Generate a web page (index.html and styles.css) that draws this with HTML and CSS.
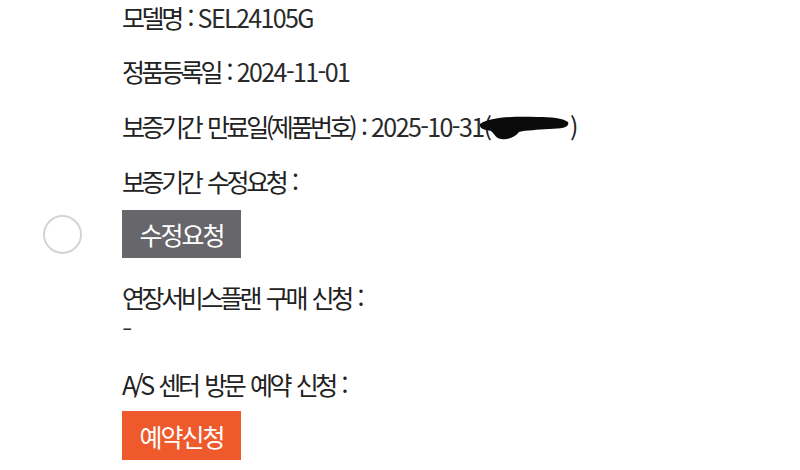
FILE: index.html
```html
<!DOCTYPE html>
<html lang="ko">
<head>
<meta charset="utf-8">
<link rel="stylesheet" href="styles.css">
</head>
<body>
<div class="sheet">
  <div class="gutter"></div>
  <div class="line l1">모델명 : <span class="val">SEL24105G</span></div>
  <div class="gutter"></div>
  <div class="line l2">정품등록일 : <span class="val">2024-11-01</span></div>
  <div class="gutter"></div>
  <div class="line l3">보증기간 만료일(제품번호) : <span class="val">2025-10-31</span><span class="redact">(<span class="hidden-num"></span><svg class="blot" width="92" height="28" viewBox="0 0 92 28"><path d="M1 10 C10 3 36 2 58 3 C72 3 84 4 89 8 C91 13 84 15 70 15 C58 16 48 16 40 18 C36 23 30 26 22 25 C16 24 16 20 12 17 C6 16 0 15 1 10 Z" fill="#0b0b0b"/></svg>)</span></div>
  <div class="gutter"></div>
  <div class="line l4">보증기간 수정요청 :</div>
  <div class="gutter radio-cell"><span class="radio"></span></div>
  <div class="btn-cell b1"><span class="btn gray">수정요청</span></div>
  <div class="gutter"></div>
  <div class="line l5">연장서비스플랜 구매 신청 :</div>
  <div class="gutter"></div>
  <div class="line dash"><span class="dash-glyph">-</span></div>
  <div class="gutter"></div>
  <div class="line l6">A/S 센터 방문 예약 신청 :</div>
  <div class="gutter"></div>
  <div class="btn-cell b2"><span class="btn orange">예약신청</span></div>
</div>
</body>
</html>
```

FILE: styles.css
```css
html, body {
  margin: 0;
  padding: 0;
  background: #ffffff;
}
body {
  width: 800px;
  height: 470px;
  overflow: hidden;
  font-family: "Noto Sans CJK KR", "Noto Sans", sans-serif;
  color: #222222;
}
.sheet {
  display: grid;
  grid-template-columns: 122px 1fr;
  align-items: center;
}
.line {
  font-size: 25px;
  line-height: 30px;
  height: 30px;
  letter-spacing: -3.4px;
  word-spacing: 3px;
  white-space: nowrap;
}
.val {
  letter-spacing: -1.6px;
  color: #2a2a2a;
}
.l1 { margin-top: 2px; }
.l2 { margin-top: 24px; }
.l3 { margin-top: 25px; }
.l4 { margin-top: 25px; }
.b1 { margin-top: 14px; }
.l5 { margin-top: 24px; }
.dash {
  margin-top: 1px;
  font-size: 18px;
  letter-spacing: 0;
  color: #2a2a2a;
}
.dash-glyph {
  display: inline-block;
  font-weight: 500;
  transform: scaleX(1.6);
  transform-origin: left center;
}
.l6 { margin-top: 26px; }
.b2 { margin-top: 12px; }
.redact {
  position: relative;
  display: inline-block;
  letter-spacing: 0;
}
.hidden-num {
  display: inline-block;
  width: 78px;
}
.blot {
  position: absolute;
  left: -4px;
  top: 3px;
}
.radio-cell {
  display: flex;
  align-items: center;
  margin-top: 14px;
}
.radio {
  display: block;
  width: 35px;
  height: 35px;
  margin-left: 43px;
  border: 2px solid #d4d4d8;
  border-radius: 50%;
  background: #fff;
}
.btn-cell {
  display: flex;
}
.btn {
  display: flex;
  align-items: center;
  justify-content: center;
  width: 119px;
  color: #ffffff;
  font-size: 25px;
  letter-spacing: -2px;
}
.gray {
  height: 48px;
  background: #67666b;
}
.orange {
  height: 49px;
  background: #ee5a2b;
}
```
